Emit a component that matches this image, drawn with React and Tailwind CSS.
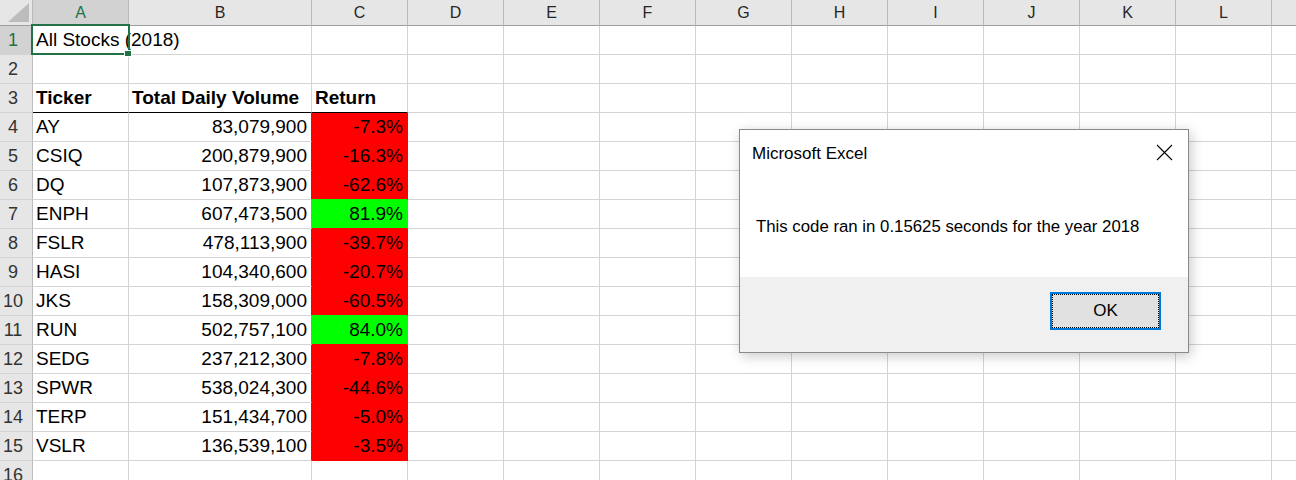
import React from "react";

const COLS = ["A", "B", "C", "D", "E", "F", "G", "H", "I", "J", "K", "L", ""];

const DATA = [
  ["AY", "83,079,900", "-7.3%", "r"],
  ["CSIQ", "200,879,900", "-16.3%", "r"],
  ["DQ", "107,873,900", "-62.6%", "r"],
  ["ENPH", "607,473,500", "81.9%", "g"],
  ["FSLR", "478,113,900", "-39.7%", "r"],
  ["HASI", "104,340,600", "-20.7%", "r"],
  ["JKS", "158,309,000", "-60.5%", "r"],
  ["RUN", "502,757,100", "84.0%", "g"],
  ["SEDG", "237,212,300", "-7.8%", "r"],
  ["SPWR", "538,024,300", "-44.6%", "r"],
  ["TERP", "151,434,700", "-5.0%", "r"],
  ["VSLR", "136,539,100", "-3.5%", "r"],
];

function ColHeader({ letter }) {
  const sel = letter === "A";
  return (
    <div
      className={
        "border-r border-b border-r-[#b9b9b9] border-b-[#9f9f9f] flex items-center justify-center text-[16px] leading-[25px] " +
        (sel ? "bg-[#d2d2d2] text-[#217346]" : "bg-[#e6e6e6] text-[#262626]")
      }
    >
      {letter}
    </div>
  );
}

function RowHeader({ n }) {
  const sel = n === 1;
  return (
    <div
      className={
        "border-r border-b border-r-[#bdbdbd] border-b-[#d4d4d4] flex justify-center pr-[6px] text-[18px] leading-[28px] overflow-hidden " +
        (sel ? "bg-[#d2d2d2] text-[#217346]" : "bg-[#e6e6e6] text-[#333333]")
      }
    >
      {n}
    </div>
  );
}

function Cell({ children, align = "left", bold = false, fill, rightColor, bottomColor, overflow = false }) {
  let cls =
    "border-r border-b text-[19px] leading-[28px] whitespace-nowrap text-black " +
    (overflow ? "overflow-visible relative z-10 " : "overflow-hidden ") +
    (align === "right" ? "text-right pr-[4px] " : "text-left pl-[3px] ") +
    (bold ? "font-bold " : "");
  const style = {};
  if (fill) style.backgroundColor = fill;
  style.borderRightColor = rightColor || "#d4d4d4";
  style.borderBottomColor = bottomColor || "#d4d4d4";
  return (
    <div className={cls} style={style}>
      {children}
    </div>
  );
}

function fillColor(k) {
  return k === "g" ? "#00ff00" : "#ff0000";
}

export default function App() {
  const cells = [];
  cells.push(
    <div key="corner" className="bg-[#e6e6e6] border-r border-b border-r-[#b9b9b9] border-b-[#9f9f9f] flex items-end justify-end pr-[3px] pb-[3px]">
      <svg width="21" height="19" viewBox="0 0 21 19">
        <polygon points="0,19 21,19 21,0" fill="#bcbcbc" />
      </svg>
    </div>
  );
  COLS.forEach((c, i) => cells.push(<ColHeader key={"h" + i} letter={c} />));

  for (let r = 1; r <= 16; r++) {
    cells.push(<RowHeader key={"rh" + r} n={r} />);
    COLS.forEach((c, i) => {
      const key = "c" + i + "-" + r;
      if (r === 1 && c === "A") {
        cells.push(
          <Cell key={key} overflow>
            All Stocks (2018)
          </Cell>
        );
      } else if (r === 3 && (c === "A" || c === "B" || c === "C")) {
        const label = c === "A" ? "Ticker" : c === "B" ? "Total Daily Volume" : "Return";
        cells.push(
          <Cell key={key} bold bottomColor="#000000">
            {label}
          </Cell>
        );
      } else if (r >= 4 && r <= 15 && (c === "A" || c === "B" || c === "C")) {
        const d = DATA[r - 4];
        const f = fillColor(d[3]);
        if (c === "A") cells.push(<Cell key={key}>{d[0]}</Cell>);
        else if (c === "B")
          cells.push(
            <Cell key={key} align="right" rightColor={f}>
              {d[1]}
            </Cell>
          );
        else
          cells.push(
            <Cell key={key} align="right" fill={f} rightColor={f} bottomColor={r === 15 ? f : fillColor(DATA[r - 3][3])}>
              {d[2]}
            </Cell>
          );
      } else {
        cells.push(<Cell key={key} />);
      }
    });
  }

  return (
    <div
      className="relative w-[1296px] h-[480px] overflow-hidden bg-white"
      style={{ fontFamily: '"Liberation Sans", Arial, sans-serif' }}
    >
      <div className="grid grid-cols-[33px_96px_183px_96px_repeat(10,96px)] grid-rows-[26px_repeat(16,29px)] w-[1368px]">
        {cells}
      </div>

      {/* active cell selection (overlay) */}
      <div className="absolute left-[31px] top-[24px] w-[99px] h-[31px] border-2 border-[#217346] z-20 pointer-events-none" />
      <div className="absolute left-[124px] top-[50px] w-[8px] h-[7px] bg-[#217346] border border-white z-30" />

      {/* message box window (overlay) */}
      <div className="absolute left-[739px] top-[129px] w-[450px] h-[224px] border border-[#8a8a8a] bg-white shadow-[2px_3px_12px_rgba(0,0,0,0.22)] flex flex-col z-40">
        <div className="h-[147px] bg-white flex flex-col pt-[12px] pl-[12px] pr-[15px]">
          <div className="flex justify-between items-start">
            <span className="text-[17px] leading-[24px] text-black">Microsoft Excel</span>
            <svg className="mt-[2px]" width="17" height="17" viewBox="0 0 17 17">
              <path d="M1 1 L16 16 M16 1 L1 16" stroke="#000" strokeWidth="1.1" fill="none" />
            </svg>
          </div>
          <div className="mt-[49px] ml-[4px] text-[16.8px] leading-[24px] text-black whitespace-nowrap">
            This code ran in 0.15625 seconds for the year 2018
          </div>
        </div>
        <div className="flex-1 bg-[#f0f0f0] flex justify-end items-start pt-[15px] pr-[27px]">
          <div className="w-[111px] h-[38px] border-2 border-[#0078d7] bg-[#e1e1e1]">
            <div className="w-full h-full border border-dotted border-black flex items-center justify-center text-[17px] text-black">
              OK
            </div>
          </div>
        </div>
      </div>
    </div>
  );
}
